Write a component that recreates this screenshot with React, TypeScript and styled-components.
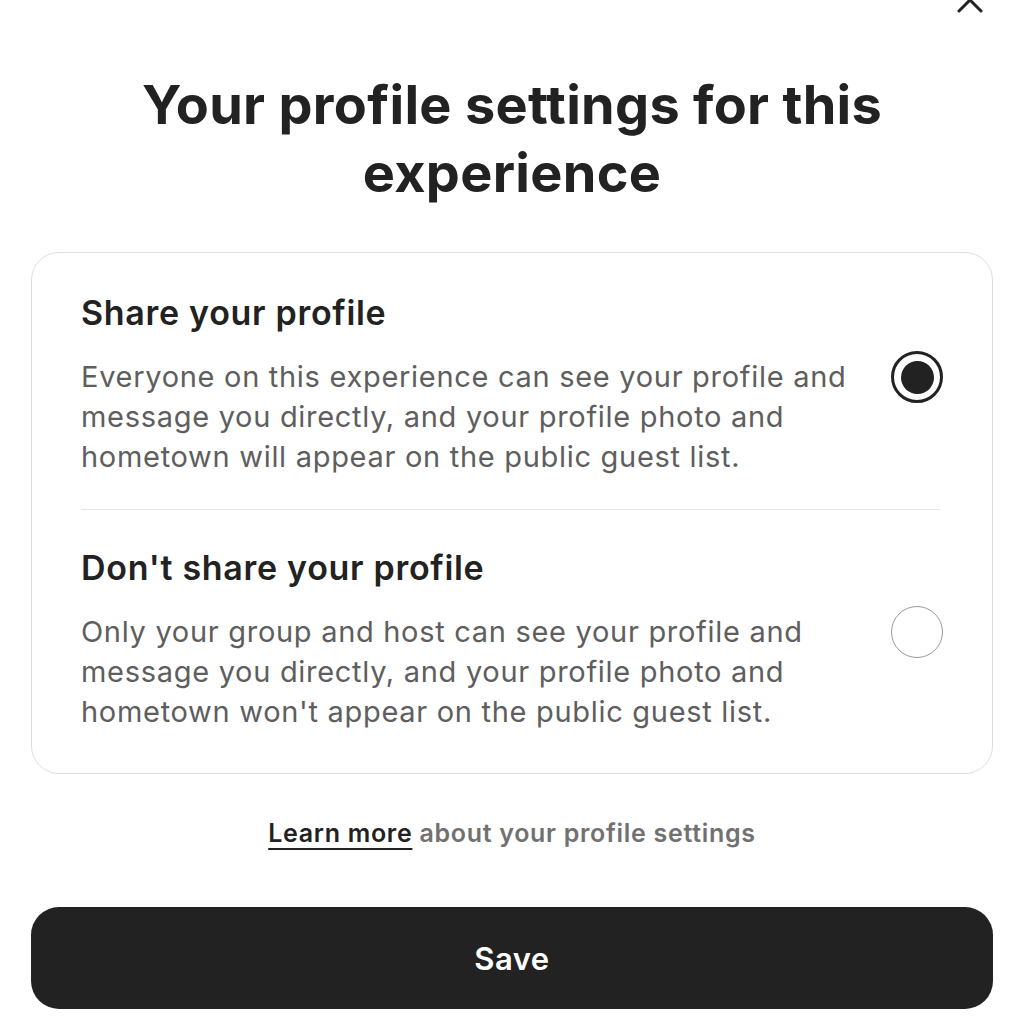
import styled, { createGlobalStyle } from 'styled-components';

const GlobalStyle = createGlobalStyle`
  html, body {
    margin: 0;
    padding: 0;
    background: #ffffff;
  }
  body {
    font-family: Inter, "Noto Sans", "Liberation Sans", sans-serif;
    color: #222222;
    -webkit-font-smoothing: antialiased;
  }
  * {
    box-sizing: border-box;
  }
`;

type Option = {
  id: string;
  title: string;
  description: string;
};

const options: Option[] = [
  {
    id: 'share',
    title: 'Share your profile',
    description:
      'Everyone on this experience can see your profile and message you directly, and your profile photo and hometown will appear on the public guest list.',
  },
  {
    id: 'private',
    title: "Don't share your profile",
    description:
      "Only your group and host can see your profile and message you directly, and your profile photo and hometown won't appear on the public guest list.",
  },
];

const CloseIcon = () => (
  <svg width='28' height='28' viewBox='0 0 28 28' fill='none'>
    <path
      d='M3 3L25 25M25 3L3 25'
      stroke='#222222'
      strokeWidth='3'
      strokeLinecap='round'
    />
  </svg>
);

export default function App() {
  const selected = 'share';

  return (
    <>
      <GlobalStyle />
      <Page>
        <TopBar>
          <CloseButton aria-label='Close'>
            <CloseIcon />
          </CloseButton>
        </TopBar>

        <Title>Your profile settings for this experience</Title>

        <Card>
          {options.map((option, i) => (
            <Section key={option.id} $first={i === 0}>
              <OptionTitle>{option.title}</OptionTitle>
              <OptionBody>
                <Description>{option.description}</Description>
                <Radio $checked={option.id === selected} />
              </OptionBody>
            </Section>
          ))}
        </Card>

        <LearnMore>
          <LearnLink href='#'>Learn more</LearnLink> about your profile settings
        </LearnMore>

        <SaveButton>Save</SaveButton>
      </Page>
    </>
  );
}

const Page = styled.div`
  width: 1024px;
  padding: 0 31px 16px 31px;
  display: flex;
  flex-direction: column;
`;

const TopBar = styled.div`
  display: flex;
  justify-content: flex-end;
  margin-top: -14px;
  padding-right: 9px;
`;

const CloseButton = styled.button`
  display: flex;
  align-items: center;
  justify-content: center;
  width: 28px;
  height: 28px;
  padding: 0;
  border: none;
  background: none;
`;

const Title = styled.h1`
  margin: 57px auto 0;
  max-width: 800px;
  font-size: 54px;
  font-weight: 700;
  line-height: 68px;
  letter-spacing: 0.3px;
  text-align: center;
  color: #222222;
`;

const Card = styled.div`
  margin-top: 45px;
  padding: 0 52px 0 49px;
  border: 1.5px solid #dddddd;
  border-radius: 28px;
  display: flex;
  flex-direction: column;
`;

const Section = styled.div<{ $first: boolean }>`
  padding: ${({ $first }) => ($first ? '40px 0 32px' : '38px 0 41px')};
  border-top: ${({ $first }) => ($first ? 'none' : '1px solid #e6e6e6')};
`;

const OptionTitle = styled.h2`
  margin: 0 0 24px;
  font-size: 34px;
  font-weight: 600;
  line-height: 40px;
  letter-spacing: 0.7px;
  color: #222222;
`;

const OptionBody = styled.div`
  display: flex;
  align-items: flex-start;
  justify-content: space-between;
  gap: 30px;
`;

const Description = styled.p`
  margin: 0;
  max-width: 790px;
  font-size: 29px;
  font-weight: 400;
  line-height: 40px;
  letter-spacing: 0.7px;
  color: #5e5e5e;
`;

const Radio = styled.span<{ $checked: boolean }>`
  flex: none;
  width: 52px;
  height: 52px;
  margin-top: -6px;
  margin-right: -3px;
  border-radius: 50%;
  border: ${({ $checked }) =>
    $checked ? '3.5px solid #222222' : '1.5px solid #9a9a9a'};
  display: flex;
  align-items: center;
  justify-content: center;

  &::after {
    content: '';
    display: ${({ $checked }) => ($checked ? 'block' : 'none')};
    width: 33px;
    height: 33px;
    border-radius: 50%;
    background: #222222;
  }
`;

const LearnMore = styled.p`
  margin: 43px 0 0;
  font-size: 25px;
  font-weight: 600;
  line-height: 32px;
  letter-spacing: 0.7px;
  text-align: center;
  color: #717171;
`;

const LearnLink = styled.a`
  color: #222222;
  text-decoration: underline;
  text-decoration-thickness: 2px;
  text-underline-offset: 6px;
`;

const SaveButton = styled.button`
  margin-top: 58px;
  height: 102px;
  width: 100%;
  border: none;
  border-radius: 28px;
  background: #222222;
  color: #ffffff;
  font-family: inherit;
  font-size: 31px;
  font-weight: 600;
  letter-spacing: 0.5px;
`;
